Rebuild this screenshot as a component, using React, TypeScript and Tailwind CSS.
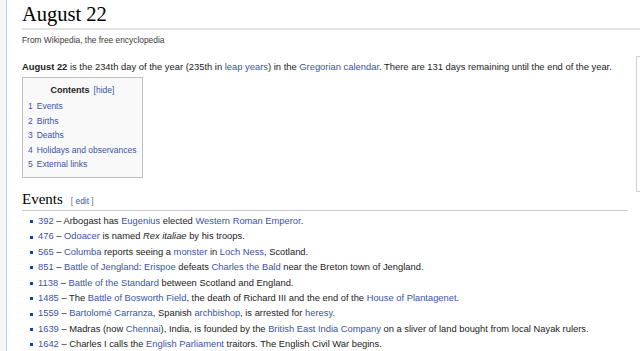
import React from 'react';

type Part = string | { t: string; link?: boolean; i?: boolean };

const events: Part[][] = [
  [{ t: '392', link: true }, ' – Arbogast has ', { t: 'Eugenius', link: true }, ' elected ', { t: 'Western Roman Emperor', link: true }, '.'],
  [{ t: '476', link: true }, ' – ', { t: 'Odoacer', link: true }, ' is named ', { t: 'Rex italiae', i: true }, ' by his troops.'],
  [{ t: '565', link: true }, ' – ', { t: 'Columba', link: true }, ' reports seeing a ', { t: 'monster', link: true }, ' in ', { t: 'Loch Ness', link: true }, ', Scotland.'],
  [{ t: '851', link: true }, ' – ', { t: 'Battle of Jengland', link: true }, ': ', { t: 'Erispoe', link: true }, ' defeats ', { t: 'Charles the Bald', link: true }, ' near the Breton town of Jengland.'],
  [{ t: '1138', link: true }, ' – ', { t: 'Battle of the Standard', link: true }, ' between Scotland and England.'],
  [{ t: '1485', link: true }, ' – The ', { t: 'Battle of Bosworth Field', link: true }, ', the death of Richard III and the end of the ', { t: 'House of Plantagenet', link: true }, '.'],
  [{ t: '1559', link: true }, ' – ', { t: 'Bartolomé Carranza', link: true }, ', Spanish ', { t: 'archbishop', link: true }, ', is arrested for ', { t: 'heresy', link: true }, '.'],
  [{ t: '1639', link: true }, ' – Madras (now ', { t: 'Chennai', link: true }, '), India, is founded by the ', { t: 'British East India Company', link: true }, ' on a sliver of land bought from local Nayak rulers.'],
  [{ t: '1642', link: true }, ' – Charles I calls the ', { t: 'English Parliament', link: true }, ' traitors. The English Civil War begins.'],
];

const toc = ['Events', 'Births', 'Deaths', 'Holidays and observances', 'External links'];

const Rich = ({ parts }: { parts: Part[] }) => (
  <>
    {parts.map((p, k) =>
      typeof p === 'string' ? (
        <span key={k}>{p}</span>
      ) : (
        <span key={k} className={(p.link ? 'text-[#3a53a4] ' : '') + (p.i ? 'italic' : '')}>
          {p.t}
        </span>
      )
    )}
  </>
);

export default function App() {
  return (
    <div className="w-[640px] h-[351px] overflow-hidden flex bg-[#f6f6f6] font-['Liberation_Sans',Arial,sans-serif] text-[#222]">
      <div className="w-[6px] shrink-0" />
      <div className="flex-1 bg-white border-l border-[#a7d7f9] pl-[15px] overflow-hidden">
        <h1 className="font-['Liberation_Serif',serif] text-[20.5px] leading-[24px] pt-[2px] pb-[2px] border-b-2 border-[#e4e4e4] text-black">
          August 22
        </h1>
        <div className="text-[8.4px] leading-[12px] mt-[4px] text-[#3a3a3a]">From Wikipedia, the free encyclopedia</div>
        <div className="float-right mt-[10px] w-[4px] h-[136px] border border-r-0 border-[#d0d0d0] bg-white" />
        <p className="text-[9.4px] leading-[15px] mt-[13px]">
          <b>August 22</b> is the 234th day of the year (235th in <span className="text-[#3a53a4]">leap years</span>) in the{' '}
          <span className="text-[#3a53a4]">Gregorian calendar</span>. There are 131 days remaining until the end of the year.
        </p>
        <div className="mt-[3px] w-[121px] h-[101px] border border-[#c0c0c0] bg-[#f9f9f9] px-[5px] pt-[5px] text-[8.5px] whitespace-nowrap">
          <div className="text-center leading-[14px]">
            <span className="font-bold text-[9px]">Contents</span>
            <span className="ml-[4px] text-[#3a53a4]">[hide]</span>
          </div>
          <ul className="mt-[2px]">
            {toc.map((t, i) => (
              <li key={t} className="leading-[14.5px] text-[#3a53a4]">
                <span className="mr-[4px]">{i + 1}</span>
                {t}
              </li>
            ))}
          </ul>
        </div>
        <h2 className="mt-[11px] mr-[12px] flex items-baseline border-b border-[#c8c8c8] pb-[1px]">
          <span className="font-['Liberation_Serif',serif] text-[15px] leading-[20px] text-black">Events</span>
          <span className="ml-[8px] text-[8.4px] text-[#3a53a4]">
            <span className="text-[#72777d]">[</span> edit <span className="text-[#72777d]">]</span>
          </span>
        </h2>
        <ul className="mt-[3px] pl-[8px] text-[9.35px]">
          {events.map((e, i) => (
            <li key={i} className="flex items-center h-[15.4px] leading-[15.4px] whitespace-nowrap">
              <span className="w-[3px] h-[3px] bg-[#0645ad] mr-[5px] shrink-0" />
              <span>
                <Rich parts={e} />
              </span>
            </li>
          ))}
        </ul>
      </div>
    </div>
  );
}
